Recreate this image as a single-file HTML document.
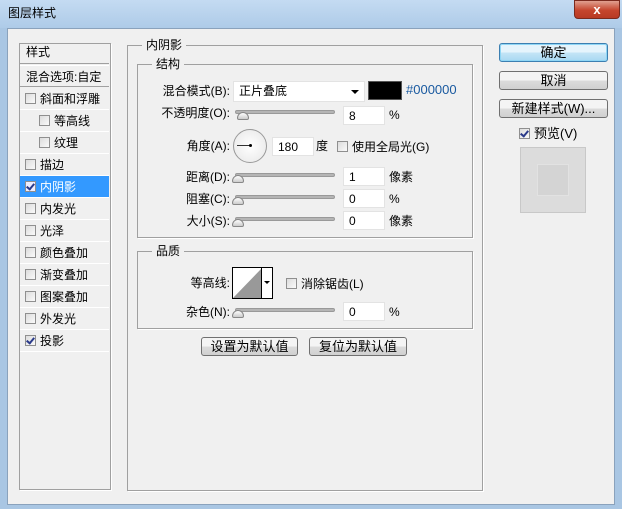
<!DOCTYPE html>
<html><head><meta charset="utf-8"><style>
*{margin:0;padding:0;box-sizing:border-box}
body{width:622px;height:509px;overflow:hidden;background:#a9c6e3;font:12px "Liberation Sans","Noto Sans CJK SC",sans-serif;color:#000;position:relative}
.a{position:absolute;line-height:16px}
.title{left:0;top:0;width:622px;height:28px;background:linear-gradient(#c4dbf2,#aecbe8);}
.body{left:7px;top:28px;width:608px;height:477px;background:#f0f0f0;border:1px solid #8aa2bc}
.box{position:absolute;border:1px solid #a0a0a0;box-shadow:1px 1px 0 #fff}
.lg{position:absolute;background:#f0f0f0;padding:0 4px;top:-9px;left:14px;line-height:16px}
.row{position:absolute;left:20px;width:89px;height:22px;line-height:22px;border-bottom:1px solid #fff}
.cb{display:inline-block;width:11px;height:11px;border:1px solid #8f8f8f;background:linear-gradient(135deg,#dcdcdc,#fafafa);vertical-align:-1px;margin-right:4px;position:relative}
.cb.k::after{content:"";position:absolute;left:2px;top:0px;width:3px;height:6px;border:solid #2a3a8a;border-width:0 2px 2px 0;transform:rotate(40deg)}
.inp{position:absolute;background:#fff;border:1px solid #e3e3e3;height:19px;line-height:18px;padding-left:5px}
.trk{position:absolute;height:4px;border-radius:2px;background:#b5b5b5;border:1px solid #999;width:100px}
.th{position:absolute;width:12px;height:8px;background:linear-gradient(#fff,#ccc);border:1px solid #888;border-radius:6px 6px 2px 2px}
.btn{position:absolute;height:19px;border:1px solid #707070;border-radius:3px;background:linear-gradient(#f4f4f4 50%,#dcdcdc 50%,#d0d0d0);text-align:center;line-height:17px;font-size:13px}
.lbl{position:absolute;text-align:right;line-height:16px}
</style></head><body>
<div class="a title"><span class="a" style="left:8px;top:5px;font-size:12px">图层样式</span>
<div class="a" style="left:574px;top:0;width:46px;height:19px;border-radius:0 0 4px 4px;background:linear-gradient(#e0a090,#c5452d 55%,#b83a24);border:1px solid #7a2a1e;color:#fff;text-align:center;font-weight:bold;font-size:13px;line-height:17px">x</div></div>
<div class="a body"></div>

<div class="box" style="left:19px;top:43px;width:92px;height:447px"></div>
<div class="row" style="top:44px;height:20px;line-height:16px;padding-left:6px;border-bottom:1px solid #a0a0a0">样式</div>
<div class="row" style="top:65px;padding-left:6px;border-top:1px solid #fff;border-bottom:1px solid #a0a0a0">混合选项:自定</div>
<div class="row" style="top:88px;padding-left:5px"><span class="cb"></span>斜面和浮雕</div>
<div class="row" style="top:110px;padding-left:19px"><span class="cb"></span>等高线</div>
<div class="row" style="top:132px;padding-left:19px"><span class="cb"></span>纹理</div>
<div class="row" style="top:154px;padding-left:5px"><span class="cb"></span>描边</div>
<div class="row" style="top:176px;padding-left:5px;background:#3399ff;color:#fff"><span class="cb k" style="background:#eef"></span>内阴影</div>
<div class="row" style="top:198px;padding-left:5px"><span class="cb"></span>内发光</div>
<div class="row" style="top:220px;padding-left:5px"><span class="cb"></span>光泽</div>
<div class="row" style="top:242px;padding-left:5px"><span class="cb"></span>颜色叠加</div>
<div class="row" style="top:264px;padding-left:5px"><span class="cb"></span>渐变叠加</div>
<div class="row" style="top:286px;padding-left:5px"><span class="cb"></span>图案叠加</div>
<div class="row" style="top:308px;padding-left:5px"><span class="cb"></span>外发光</div>
<div class="row" style="top:330px;padding-left:5px"><span class="cb k"></span>投影</div>

<div class="box" style="left:127px;top:45px;width:356px;height:446px"><span class="lg">内阴影</span></div>
<div class="box" style="left:137px;top:64px;width:336px;height:174px"><span class="lg">结构</span></div>
<div class="lbl" style="left:150px;top:83px;width:80px">混合模式(B):</div>
<div class="inp" style="left:233px;top:81px;width:132px;height:21px;line-height:19px">正片叠底<span class="a" style="right:5px;top:8px;border:4px solid transparent;border-top:4px solid #000;border-bottom:0"></span></div>
<div class="a" style="left:368px;top:81px;width:34px;height:19px;background:#000;border:1px solid #555"></div>
<div class="a" style="left:406px;top:82px;color:#1a5aa0;font-size:13px">#000000</div>
<div class="lbl" style="left:150px;top:105px;width:80px">不透明度(O):</div>
<div class="trk" style="left:235px;top:110px"></div><div class="th" style="left:237px;top:112px"></div>
<div class="inp" style="left:343px;top:106px;width:42px">8</div><div class="a" style="left:389px;top:107px">%</div>
<div class="lbl" style="left:150px;top:138px;width:80px">角度(A):</div>
<div class="a" style="left:233px;top:129px;width:34px;height:34px;border-radius:50%;border:1px solid #999;background:radial-gradient(#fff,#e6e6e6)"></div>
<div class="a" style="left:237px;top:145px;width:13px;height:1px;background:#333"></div>
<div class="a" style="left:249px;top:144px;width:3px;height:3px;background:#000;border-radius:50%"></div>
<div class="inp" style="left:272px;top:137px;width:42px">180</div><div class="a" style="left:316px;top:138px;font-size:12px">度</div>
<div class="a" style="left:337px;top:139px"><span class="cb"></span>使用全局光(G)</div>
<div class="lbl" style="left:150px;top:169px;width:80px">距离(D):</div>
<div class="trk" style="left:235px;top:173px"></div><div class="th" style="left:232px;top:175px"></div>
<div class="inp" style="left:343px;top:167px;width:42px">1</div><div class="a" style="left:389px;top:169px;font-size:12px">像素</div>
<div class="lbl" style="left:150px;top:191px;width:80px">阻塞(C):</div>
<div class="trk" style="left:235px;top:195px"></div><div class="th" style="left:232px;top:197px"></div>
<div class="inp" style="left:343px;top:189px;width:42px">0</div><div class="a" style="left:389px;top:191px">%</div>
<div class="lbl" style="left:150px;top:213px;width:80px">大小(S):</div>
<div class="trk" style="left:235px;top:217px"></div><div class="th" style="left:232px;top:219px"></div>
<div class="inp" style="left:343px;top:211px;width:42px">0</div><div class="a" style="left:389px;top:213px;font-size:12px">像素</div>

<div class="box" style="left:137px;top:251px;width:336px;height:78px"><span class="lg">品质</span></div>
<div class="lbl" style="left:150px;top:275px;width:80px">等高线:</div>
<div class="a" style="left:232px;top:267px;width:41px;height:32px;border:1px solid #000;background:#fff">
<svg width="29" height="30" style="position:absolute;left:0;top:0"><polygon points="0,30 29,0 29,30" fill="#999"/></svg>
<div class="a" style="left:28px;top:0;width:1px;height:30px;background:#000"></div>
<span class="a" style="left:31px;top:13px;border:3px solid transparent;border-top:3px solid #000;border-bottom:0"></span></div>
<div class="a" style="left:286px;top:276px"><span class="cb"></span>消除锯齿(L)</div>
<div class="lbl" style="left:150px;top:304px;width:80px">杂色(N):</div>
<div class="trk" style="left:235px;top:308px"></div><div class="th" style="left:232px;top:310px"></div>
<div class="inp" style="left:343px;top:302px;width:42px">0</div><div class="a" style="left:389px;top:304px">%</div>
<div class="btn" style="left:201px;top:337px;width:97px">设置为默认值</div>
<div class="btn" style="left:309px;top:337px;width:98px">复位为默认值</div>

<div class="btn" style="left:499px;top:43px;width:109px;border-color:#3c7fb1;background:linear-gradient(#e5f4fc 50%,#c4e5f6 50%,#a8d8f2);box-shadow:0 0 0 1px #8fd6f5 inset">确定</div>
<div class="btn" style="left:499px;top:71px;width:109px">取消</div>
<div class="btn" style="left:499px;top:99px;width:109px">新建样式(W)...</div>
<div class="a" style="left:519px;top:126px;font-size:13px"><span class="cb k"></span>预览(V)</div>
<div class="a" style="left:520px;top:147px;width:66px;height:66px;border:1px solid #c8c8c8;background:#dcdcdc"><div class="a" style="left:16px;top:16px;width:32px;height:32px;background:#d4d4d4;border:1px solid #e2e2e2"></div></div>
</body></html>
